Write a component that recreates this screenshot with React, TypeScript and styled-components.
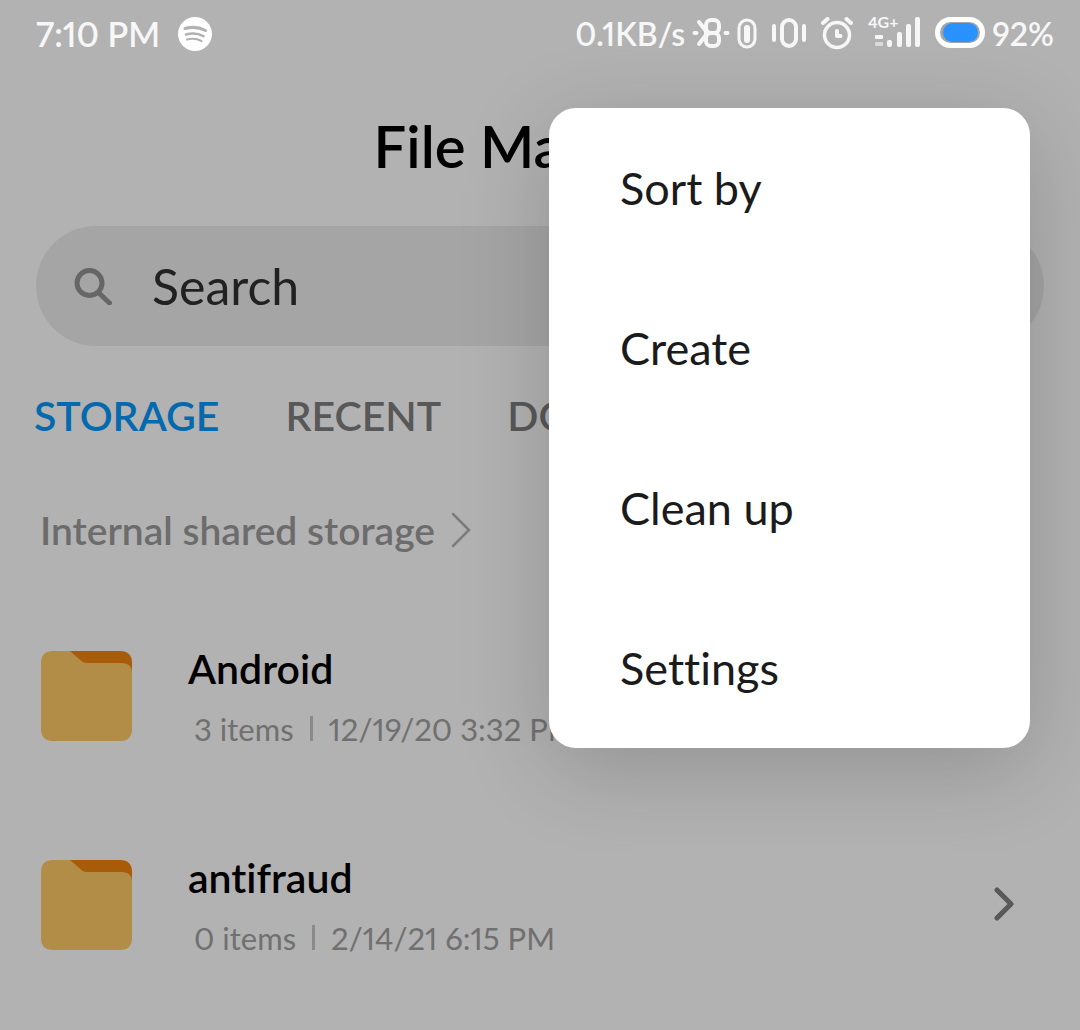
import React from "react";
import styled, { createGlobalStyle } from "styled-components";

const Global = createGlobalStyle`
  *, *::before, *::after { box-sizing: border-box; }
  html, body { margin: 0; background: #b2b2b2; }
  body {
    font-family: Lato, "Noto Sans", sans-serif;
    font-variant-ligatures: none;
    font-variant-numeric: proportional-nums;
    color: #000;
    overflow-x: hidden;
  }
  button, input { font: inherit; font-variant: inherit; color: inherit; border: 0; background: none; padding: 0; margin: 0; }
  h1, h2, p, ul { margin: 0; padding: 0; }
  ul { list-style: none; }
  svg { display: block; flex: none; }
`;

const Screen = styled.div`
  position: relative;
  min-height: 100vh;
  overflow: hidden;
`;

const StatusBar = styled.header`
  display: flex;
  justify-content: space-between;
  align-items: center;
  height: 68px;
  padding: 0 26px 0 36px;
  color: #f7f7f7;
  line-height: 40px;
  font-weight: 600;
`;

const StatusGroup = styled.div<{ $gap: number; $size?: number }>`
  display: flex;
  align-items: center;
  gap: ${(p) => p.$gap}px;
  font-size: ${(p) => p.$size ?? 32}px;
`;

const Title = styled.h1`
  padding: 43px 0 45px;
  font-size: 58px;
  line-height: 70px;
  font-weight: 600;
  text-align: center;
`;

const SearchBox = styled.label`
  display: flex;
  align-items: center;
  gap: 40px;
  height: 120px;
  margin: 0 36px;
  padding: 0 38px;
  border-radius: 60px;
  background: #a5a5a5;
`;

const SearchInput = styled.input`
  flex: 1;
  min-width: 0;
  height: 64px;
  font-size: 50px;
  outline: none;
  &::placeholder { color: #212121; opacity: 1; }
`;

const Tabs = styled.nav`
  display: flex;
  gap: 66px;
  padding: 44px 34px;
`;

const Tab = styled.button<{ $active?: boolean }>`
  font-size: 41px;
  line-height: 52px;
  font-weight: 600;
  color: ${(p) => (p.$active ? "#0569ae" : "#585858")};
`;

const PathButton = styled.button`
  display: flex;
  align-items: center;
  gap: 16px;
  margin: 18px 40px 0;
  font-size: 39px;
  line-height: 52px;
  font-weight: 600;
  color: #6c6c6c;
`;

const FileList = styled.ul`
  padding-top: 35px;
`;

const FileRow = styled.li`
  display: flex;
  align-items: center;
  height: 209px;
  padding: 0 66px 0 41px;
`;

const FileText = styled.div`
  flex: 1;
  margin-left: 56px;
  padding-top: 6px;
`;

const FileName = styled.h2`
  font-size: 41px;
  line-height: 60px;
  font-weight: 600;
`;

const FileMeta = styled.p`
  display: flex;
  align-items: center;
  gap: 16px;
  padding-left: 6px;
  font-size: 31px;
  line-height: 60px;
  color: #707070;
`;

const Divider = styled.span`
  width: 3px;
  height: 25px;
  background: #8a8a8a;
`;

const Menu = styled.ul`
  position: absolute;
  top: 108px;
  right: 50px;
  width: 481px;
  border-radius: 27px;
  background: #fff;
  box-shadow: 0 20px 90px rgba(0, 0, 0, 0.18);
`;

const MenuItem = styled.button`
  display: block;
  width: 100%;
  height: 160px;
  padding: 0 71px;
  text-align: left;
  font-size: 45px;
  line-height: 56px;
  color: #1b1b1b;
`;

const MusicIcon = () => (
  <svg width="34" height="34" viewBox="0 0 34 34" aria-hidden="true">
    <circle cx="17" cy="17" r="17" fill="#fff" />
    <g fill="none" stroke="#b2b2b2" strokeLinecap="round">
      <path d="M7 11.5Q18 8.5 27.5 13.5" strokeWidth="3" />
      <path d="M8 17.5Q17.5 15 25.5 19.2" strokeWidth="2.6" />
      <path d="M9 22.5Q17 20.5 23.5 24" strokeWidth="2.2" />
    </g>
  </svg>
);

const BluetoothIcon = () => (
  <svg width="38" height="32" viewBox="0 0 38 32" fill="none" stroke="#f7f7f7" strokeWidth="4" strokeLinecap="round" strokeLinejoin="round" aria-hidden="true">
    <rect x="14" y="2" width="13" height="13" rx="5" />
    <rect x="14" y="15" width="13" height="13" rx="5" />
    <path d="M7 4L14 13V17L7 26" />
    <path d="M2.5 15H4.5M33.5 15H35.5" />
  </svg>
);

const PillIcon = () => (
  <svg width="20" height="32" viewBox="0 0 20 32" aria-hidden="true">
    <rect x="2" y="2" width="16" height="27" rx="8" fill="none" stroke="#f7f7f7" strokeWidth="3" />
    <rect x="7" y="7" width="6" height="18" rx="3" fill="#f7f7f7" />
  </svg>
);

const VibrateIcon = () => (
  <svg width="36" height="32" viewBox="0 0 36 32" fill="none" stroke="#f7f7f7" strokeLinecap="round" aria-hidden="true">
    <rect x="11" y="2" width="14" height="26" rx="7" strokeWidth="4" />
    <path d="M3 8V22M33 8V22" strokeWidth="4" />
  </svg>
);

const AlarmIcon = () => (
  <svg width="32" height="34" viewBox="0 0 32 34" fill="none" stroke="#f7f7f7" strokeLinecap="round" strokeLinejoin="round" aria-hidden="true">
    <circle cx="16" cy="18" r="12.5" strokeWidth="3.5" />
    <path d="M2 6L6.5 2M30 6L25.5 2" strokeWidth="4" />
    <path d="M16 14V19H19.5" strokeWidth="4" />
  </svg>
);

const SignalIcon = () => (
  <svg width="54" height="44" viewBox="0 0 54 44" aria-hidden="true">
    <text x="1" y="16" fontSize="16" fontWeight="700" fontFamily="Lato, sans-serif" fill="#f7f7f7">4G+</text>
    <g fill="#f7f7f7">
      <rect x="8" y="23" width="8" height="4" rx="1" />
      <rect x="8" y="30" width="8" height="4" rx="1" opacity="0.6" />
      <rect x="20" y="28" width="5" height="7" rx="2" />
      <rect x="30" y="20" width="5" height="15" rx="2" />
      <rect x="39" y="12" width="5" height="23" rx="2" />
      <rect x="48" y="5" width="5" height="30" rx="2" />
    </g>
  </svg>
);

const BatteryIcon = () => (
  <svg width="50" height="34" viewBox="0 0 50 34" aria-hidden="true">
    <rect x="2.5" y="2.5" width="45" height="26" rx="13" fill="#a5a5a5" stroke="#fff" strokeWidth="5" />
    <rect x="8" y="6" width="35" height="19" rx="9.5" fill="#2a92ff" />
  </svg>
);

const SearchIcon = () => (
  <svg width="38" height="38" viewBox="0 0 38 38" fill="none" stroke="#666" strokeWidth="5" strokeLinecap="round" aria-hidden="true">
    <circle cx="15.5" cy="16" r="12.5" />
    <path d="M25 26L35.5 36" />
  </svg>
);

const ThinChevron = () => (
  <svg width="20" height="36" viewBox="0 0 20 36" fill="none" stroke="#7c7c7c" strokeWidth="2.5" strokeLinecap="round" aria-hidden="true">
    <path d="M2 2L18 18L2 34" />
  </svg>
);

const RowChevron = () => (
  <svg width="20" height="36" viewBox="0 0 20 36" fill="none" stroke="#595959" strokeWidth="5" strokeLinecap="round" strokeLinejoin="round" aria-hidden="true">
    <path d="M3 3L17 17L3 31" />
  </svg>
);

const FolderIcon = () => (
  <svg width="91" height="90" viewBox="0 0 91 90" aria-hidden="true">
    <path d="M26 0H79Q91 0 91 12V34H26Z" fill="#a85c0a" />
    <path d="M12 0H29L41 10.5Q43 12 46 12H81Q91 12 91 22V78Q91 90 79 90H12Q0 90 0 78V12Q0 0 12 0Z" fill="#b28d48" />
  </svg>
);

const files = [
  { name: "Android", items: "3 items", date: "12/19/20 3:32 PM" },
  { name: "antifraud", items: "0 items", date: "2/14/21 6:15 PM" },
];

const actions = ["Sort by", "Create", "Clean up", "Settings"];

export default function App() {
  return (
    <Screen>
      <Global />
      <StatusBar>
        <StatusGroup $gap={18} $size={34}>
          <span>7:10 PM</span>
          <MusicIcon />
        </StatusGroup>
        <StatusGroup $gap={7}>
          <span>0.1KB/s</span>
          <BluetoothIcon />
          <StatusGroup $gap={14}>
            <PillIcon />
            <VibrateIcon />
            <AlarmIcon />
            <SignalIcon />
            <BatteryIcon />
          </StatusGroup>
          <span>92%</span>
        </StatusGroup>
      </StatusBar>
      <main>
        <Title>File Manager</Title>
        <SearchBox>
          <SearchIcon />
          <SearchInput type="text" placeholder="Search" aria-label="Search" />
        </SearchBox>
        <Tabs>
          <Tab $active>STORAGE</Tab>
          <Tab>RECENT</Tab>
          <Tab>DOCS</Tab>
        </Tabs>
        <PathButton>
          Internal shared storage
          <ThinChevron />
        </PathButton>
        <FileList>
          {files.map((f) => (
            <FileRow key={f.name}>
              <FolderIcon />
              <FileText>
                <FileName>{f.name}</FileName>
                <FileMeta>
                  <span>{f.items}</span>
                  <Divider />
                  <span>{f.date}</span>
                </FileMeta>
              </FileText>
              <RowChevron />
            </FileRow>
          ))}
        </FileList>
      </main>
      <Menu>
        {actions.map((a) => (
          <li key={a}>
            <MenuItem>{a}</MenuItem>
          </li>
        ))}
      </Menu>
    </Screen>
  );
}
